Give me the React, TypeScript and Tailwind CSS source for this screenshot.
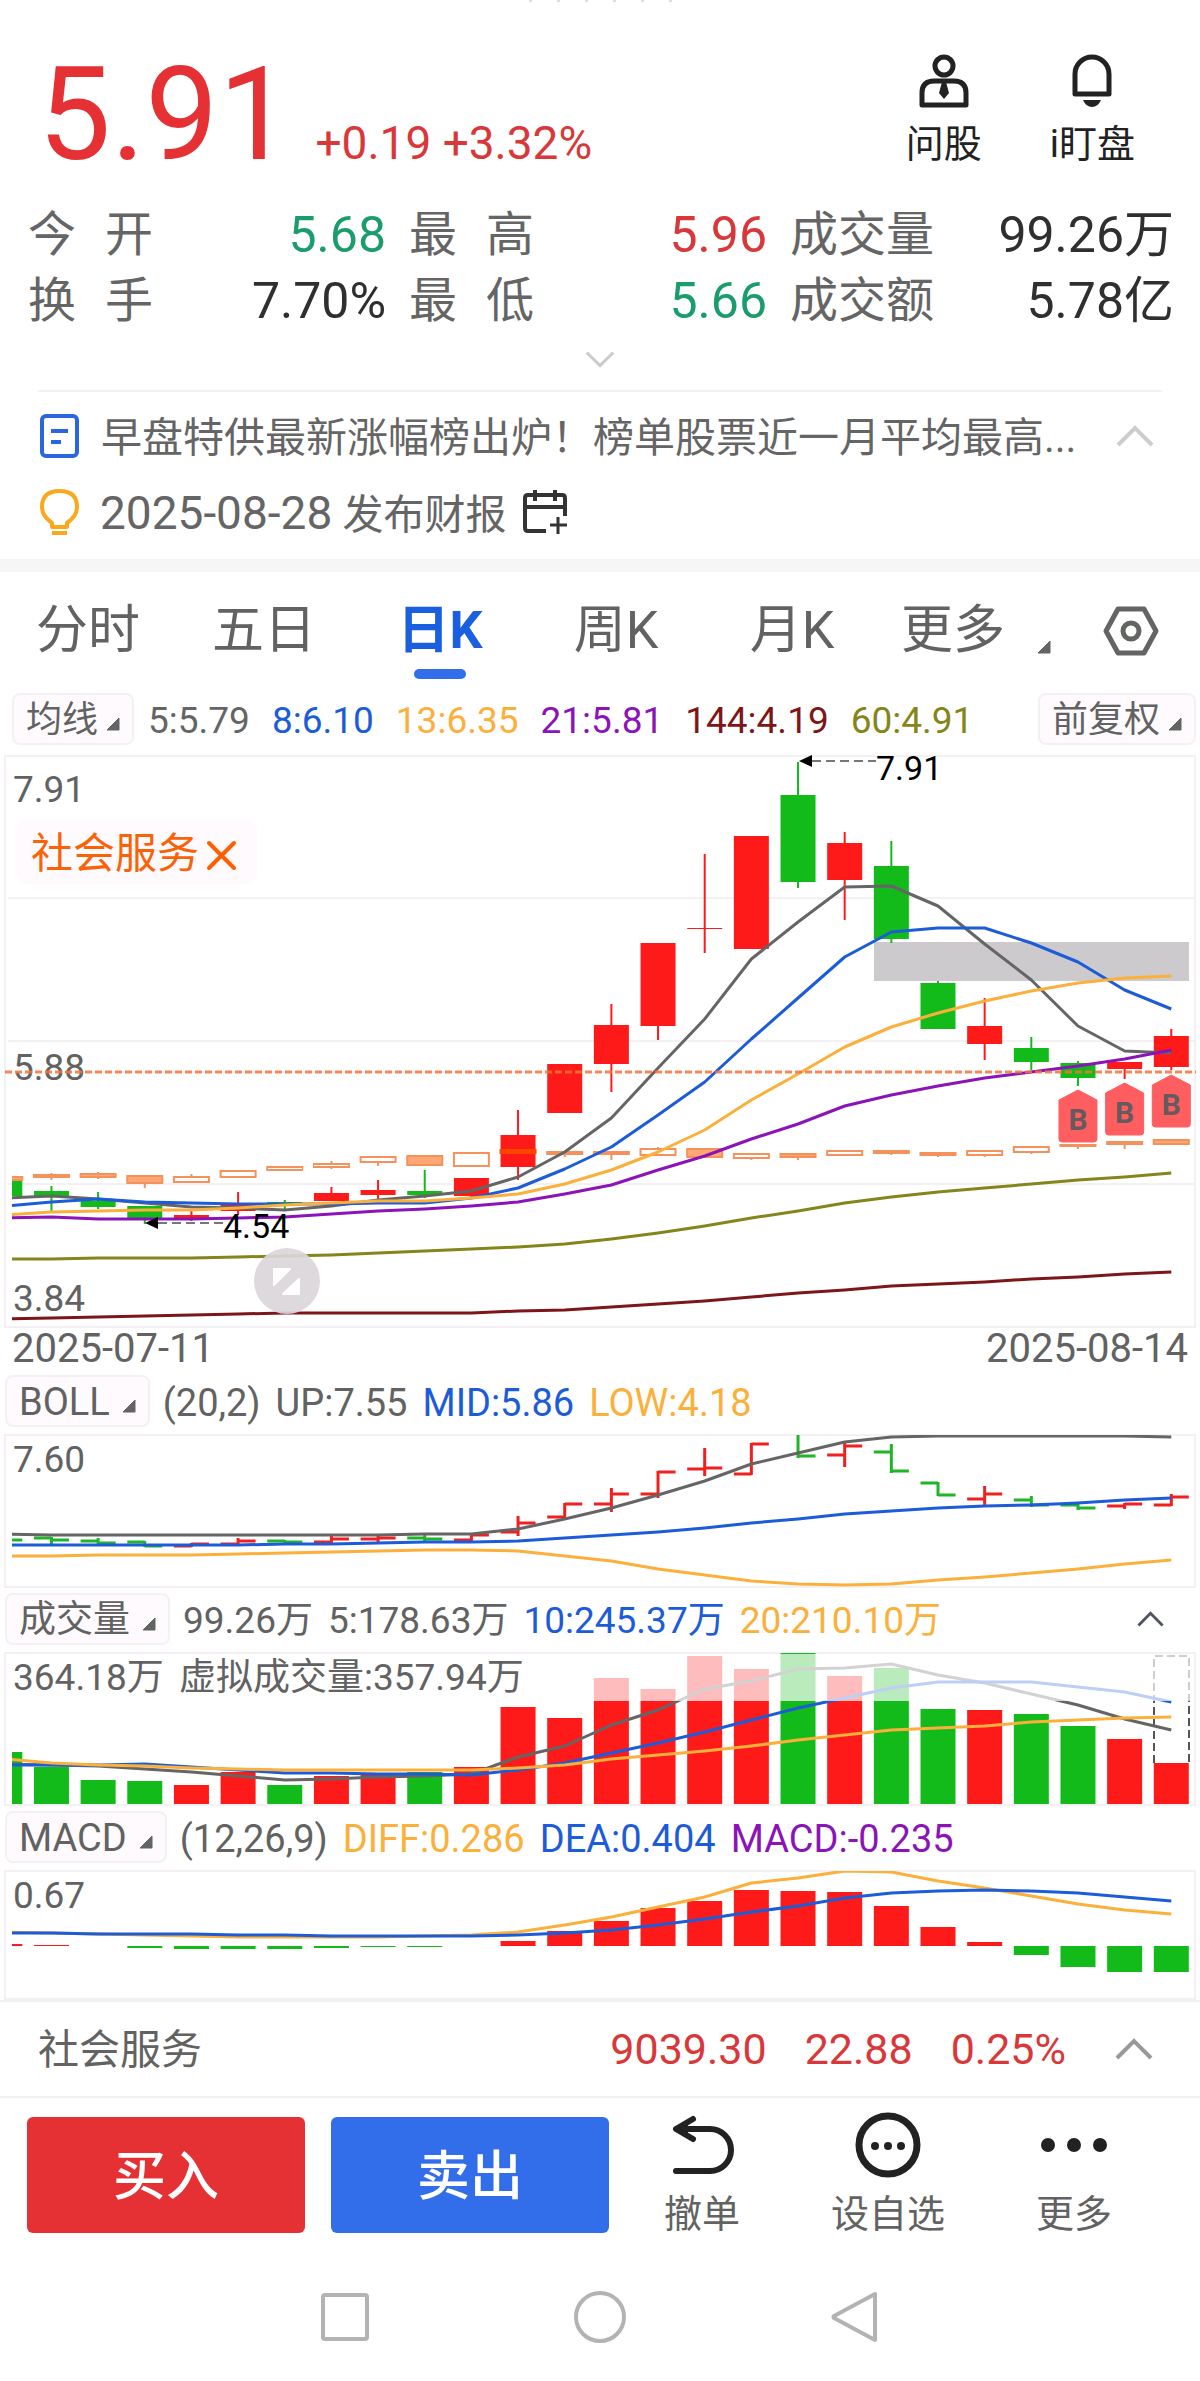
import type { ReactNode } from "react";

const RED = "#ff1a1a";
const GREEN = "#12bb1a";
const GRAY = "#656565";
const BLUE = "#1c5cd8";
const AMBER = "#fbb03b";
const PURPLE = "#8b14b8";
const MAROON = "#7d1618";
const OLIVE = "#85851c";
const FRAME = "#f5f0f4";

const STEP = 46.66;
const HALF = 17.5;
const cx = (i: number) => 4.8 + i * STEP;

// [up, top, bottom, high, low]
const candles: [number, number, number, number, number][] = [
  [0, 425, 441, 425, 441], [0, 436, 441, 431, 456], [0, 446, 452, 437, 454], [0, 451, 463, 451, 469],
  [1, 460, 463, 454, 466], [1, 449, 456, 437, 460], [0, 447, 449, 445, 456], [1, 438, 446, 432, 446],
  [1, 435, 440, 425, 445], [0, 436, 440, 415, 443], [1, 423, 441, 423, 442], [1, 380, 412, 355, 425],
  [1, 309, 358, 309, 358], [1, 270, 309, 249, 337], [1, 188, 271, 188, 285], [1, 173, 174, 99, 198],
  [1, 81, 194, 81, 194], [0, 40, 127, 7, 133], [1, 88, 125, 77, 165], [0, 111, 184, 86, 188],
  [0, 228, 274, 226, 274], [1, 271, 289, 243, 305], [0, 293, 307, 282, 315], [0, 308, 323, 306, 331],
  [1, 307, 314, 307, 324], [1, 281, 312, 274, 315]
];

// sector index drawn over the stock: [filled, top, bottom, high, low]
const sector: [number, number, number, number, number][] = [
  [1, 422, 425, 422, 425], [1, 420, 422, 418, 425], [1, 419, 422, 417, 424], [1, 421, 428, 421, 433],
  [0, 422, 427, 419, 427], [0, 416, 422, 416, 422], [0, 412, 415, 412, 415], [0, 409, 412, 406, 414],
  [0, 402, 407, 402, 411], [1, 401, 410, 401, 411], [0, 398, 411, 398, 411], [1, 395, 398, 394, 399],
  [1, 397, 399, 397, 402], [1, 397, 399, 397, 405], [0, 394, 400, 392, 401], [1, 394, 402, 394, 402],
  [0, 399, 403, 399, 405], [1, 399, 402, 399, 405], [0, 396, 400, 396, 400], [1, 396, 398, 395, 400],
  [1, 398, 400, 397, 402], [0, 396, 400, 395, 402], [0, 392, 397, 392, 399], [1, 390, 391, 389, 394],
  [1, 387, 389, 387, 394], [1, 385, 389, 385, 390]
];

const averages = [
  { color: MAROON, points: [564, 563, 562, 561, 560, 559, 558, 558, 558, 558, 558, 556, 555, 552, 549, 546, 542, 538, 535, 531, 529, 527, 524, 522, 519, 517] },
  { color: OLIVE, points: [504, 504, 503, 503, 503, 502, 501, 500, 498, 496, 494, 492, 489, 484, 478, 471, 463, 456, 448, 442, 437, 433, 429, 425, 422, 418] },
  { color: GRAY, points: [443, 441, 444, 448, 452, 453, 455, 451, 445, 441, 436, 422, 397, 363, 313, 264, 204, 167, 132, 131, 151, 189, 225, 271, 296, 298] },
  { color: BLUE, points: [451, 447, 444, 447, 448, 449, 449, 449, 448, 448, 443, 433, 414, 392, 360, 327, 284, 243, 202, 177, 173, 173, 188, 207, 235, 254] },
  { color: AMBER, points: [460, 457, 456, 455, 455, 453, 450, 448, 446, 446, 443, 439, 429, 415, 397, 375, 345, 319, 292, 272, 258, 246, 236, 228, 223, 221] },
  { color: PURPLE, points: [463, 462, 464, 464, 464, 463, 462, 459, 456, 454, 451, 447, 439, 430, 415, 401, 384, 369, 351, 340, 331, 323, 317, 311, 304, 295] }
];

// [up, open, close, high, low]
const bollBars: [number, number, number, number, number][] = [
  [0, 104, 106, 104, 106], [0, 104, 106, 104, 109], [0, 107, 109, 105, 109], [0, 108, 112, 108, 112],
  [1, 112, 110, 110, 112], [1, 110, 107, 105, 110], [0, 107, 108, 107, 108], [1, 108, 105, 103, 108],
  [1, 105, 104, 102, 107], [0, 104, 105, 102, 106], [1, 106, 101, 101, 106], [1, 98, 89, 83, 101],
  [1, 83, 70, 70, 83], [1, 70, 60, 55, 77], [1, 60, 38, 38, 63], [1, 35, 34, 15, 41],
  [1, 40, 10, 10, 40], [0, -4, 22, 1, 23], [1, 21, 12, 9, 32], [0, 18, 37, 11, 38],
  [0, 49, 61, 49, 61], [1, 65, 60, 53, 70], [0, 66, 71, 63, 72], [0, 71, 74, 69, 75],
  [1, 72, 70, 70, 74], [1, 71, 63, 61, 71]
];

const bollLines = [
  { color: GRAY, points: [100, 101, 101, 101, 101, 101, 101, 101, 101, 100, 100, 95, 85, 74, 61, 47, 30, 19, 8, 3, 2, 2, 2, 2, 2, 3] },
  { color: BLUE, points: [111, 111, 111, 111, 111, 111, 110, 110, 109, 108, 108, 107, 104, 101, 98, 94, 89, 85, 80, 77, 74, 72, 71, 69, 66, 64] },
  { color: AMBER, points: [122, 122, 121, 121, 121, 120, 119, 118, 117, 116, 116, 117, 122, 127, 135, 141, 147, 150, 151, 150, 146, 143, 139, 135, 130, 126] }
];

// [up, top]
const volumes: [number, number][] = [
  [0, 100], [0, 115], [0, 128], [0, 129], [1, 133], [1, 120], [0, 133], [1, 124], [1, 122], [0, 120], [1, 115], [1, 55], [1, 66],
  [1, 26], [1, 37], [1, 4], [1, 17], [0, 1], [1, 24], [0, 16], [0, 57], [1, 58], [0, 62], [0, 74], [1, 87], [1, 111]
];

const volumeLines = [
  { color: GRAY, points: [112, 113, 114, 117, 120, 124, 128, 127, 125, 124, 122, 105, 94, 73, 58, 37, 29, 17, 16, 12, 23, 31, 42, 53, 67, 78] },
  { color: BLUE, points: [113, 113, 113, 112, 115, 118, 121, 121, 122, 122, 123, 118, 111, 101, 91, 80, 68, 56, 46, 36, 30, 30, 30, 35, 40, 50] },
  { color: AMBER, points: [107, 111, 113, 114, 116, 117, 118, 118, 118, 118, 118, 116, 113, 107, 103, 99, 94, 88, 83, 78, 76, 74, 70, 68, 66, 65] }
];

const macdBars = [-2, -1, 0, 2, 3, 3, 3, 2, 1, 1, 0, -5, -15, -25, -38, -45, -56, -55, -54, -40, -19, -4, 9, 21, 26, 26];

const macdLines = [
  { color: AMBER, points: [62, 63, 64, 65, 66, 67, 67, 67, 67, 66, 65, 62, 55, 47, 37, 27, 13, 8, 1, 2, 11, 18, 26, 34, 40, 44] },
  { color: BLUE, points: [63, 63, 64, 64, 64, 65, 65, 66, 66, 66, 66, 65, 63, 60, 55, 49, 42, 36, 28, 23, 21, 20, 21, 23, 27, 31] }
];

const buyMarks = [{ i: 23, y: 335 }, { i: 24, y: 328 }, { i: 25, y: 320 }];

const stats = [
  { name: ["今", "开"], value: "5.68", tone: "text-[#1a9c6b]" },
  { name: ["最", "高"], value: "5.96", tone: "text-[#d9383a]" },
  { name: ["成交量"], value: "99.26万", tone: "text-[#2f2f2f]" },
  { name: ["换", "手"], value: "7.70%", tone: "text-[#2f2f2f]" },
  { name: ["最", "低"], value: "5.66", tone: "text-[#1a9c6b]" },
  { name: ["成交额"], value: "5.78亿", tone: "text-[#2f2f2f]" }
];

const periods = ["分时", "五日", "日K", "周K", "月K"];

function Lines({ series }: { series: { color: string; points: number[] }[] }) {
  return (
    <>
      {series.map((line) => (
        <polyline
          key={line.color}
          points={line.points.map((y, i) => `${cx(i)},${y}`).join(" ")}
          fill="none"
          stroke={line.color}
          strokeWidth="3"
          strokeLinejoin="round"
        />
      ))}
    </>
  );
}

function Chart({ height, label, id, children }: { height: number; label: string; id: string; children: ReactNode }) {
  return (
    <svg viewBox={`0 0 1200 ${height}`} className="block h-auto w-full overflow-visible" role="img" aria-label={label}>
      <clipPath id={id}>
        <rect x="12" y="1" width="1178" height={height - 2} />
      </clipPath>
      <rect x="5" y="1" width="1190" height={height - 2} fill="none" stroke={FRAME} strokeWidth="2" />
      {children}
    </svg>
  );
}

function Corner({ className = "" }: { className?: string }) {
  return (
    <svg viewBox="0 0 14 14" className={`size-[14px] shrink-0 ${className}`} aria-hidden="true">
      <path d="M13 1v12H1z" fill="#626562" stroke="#626562" strokeWidth="1" strokeLinejoin="round" />
    </svg>
  );
}

function Chevron({ down = false, className }: { down?: boolean; className: string }) {
  return (
    <svg viewBox="0 0 38 22" className={className} fill="none" stroke="currentColor" strokeWidth="4" aria-hidden="true">
      <path d={down ? "M2 2l17 17L36 2" : "M2 20L19 3l17 17"} />
    </svg>
  );
}

function Picker({ children, className }: { children: ReactNode; className: string }) {
  return (
    <button className={`flex h-[52px] shrink-0 items-center rounded-lg border-2 border-[#f5f0f4] bg-[#fefafe] pt-[2px] text-[#626262] ${className}`}>
      {children}
      <Corner className="mt-2" />
    </button>
  );
}

function IndicatorRow({ name, size = "text-[38px]", children }: { name: string; size?: string; children: ReactNode }) {
  return (
    <div className={`flex items-center gap-[15px] pt-[5px] pr-[36px] pb-[7px] pl-[5px] leading-[48px] whitespace-nowrap text-[#626262] [&>span]:pt-1 ${size}`}>
      <Picker className="-mr-[2px] gap-3 px-3">{name}</Picker>
      {children}
    </div>
  );
}

function PriceChart() {
  return (
    <Chart height={573} label="日K线图" id="price">
      {[143, 286, 429].map((y) => (
        <path key={y} d={`M8 ${y}H1194`} stroke={FRAME} strokeWidth="2" />
      ))}
      <rect x="16" y="64" width="241" height="65" rx="12" fill="#fefafe" />
      <g fill="#626262" fontSize="37">
        <text x="13" y="47">7.91</text>
        <text x="13" y="325">5.88</text>
        <text x="13" y="556">3.84</text>
      </g>
      <text x="31" y="113" fill="#fa6208" fontSize="42">社会服务</text>
      <path d="M209 88l25 25M234 88l-25 25" stroke="#fe5f00" strokeWidth="4" strokeLinecap="round" />
      <rect x="874" y="187" width="315" height="39" fill="#cdcacd" />
      <g clipPath="url(#price)">
        {candles.map(([up, top, bottom, high, low], i) => (
          <g key={i} fill={up ? RED : GREEN}>
            <rect x={cx(i) - HALF} y={top} width={HALF * 2} height={bottom - top} />
            <rect x={cx(i) - 1} y={high} width="2" height={low - high} />
          </g>
        ))}
        {sector.map(([filled, top, bottom, high, low], i) => (
          <g key={i} stroke={i === 11 ? "#ff4400" : "#f5925c"} strokeWidth="2">
            <path d={`M${cx(i)} ${high}V${top}M${cx(i)} ${bottom}V${low}`} />
            <rect
              x={cx(i) - HALF}
              y={top}
              width={HALF * 2}
              height={bottom - top}
              fill={i === 11 ? "#ff4400" : filled ? "#ffa873" : "#fff"}
            />
          </g>
        ))}
        <Lines series={averages} />
      </g>
      <path d="M5 317H1196" stroke="#f0743a" strokeOpacity="0.85" strokeWidth="3" strokeDasharray="7 3" />
      {buyMarks.map(({ i, y }) => (
        <g key={i}>
          <path
            d={`M${cx(i)} ${y}l19 10v39q0 3 -3 3h-32q-3 0 -3 -3v-39z`}
            fill="#ff5e61"
            stroke="#ff5e61"
            strokeLinejoin="round"
          />
          <text x={cx(i)} y={y + 40} textAnchor="middle" fontSize="30" fontWeight="700" fill="#685a5c">B</text>
        </g>
      ))}
      <g fontSize="34" fill="#000">
        <path d="M799 6l13-6v12z" />
        <path d="M812 6H876" stroke="#777" strokeWidth="2" strokeDasharray="9 5" />
        <text x="876" y="25">7.91</text>
        <path d="M145 468l13-6v12z" />
        <path d="M158 468H223" stroke="#777" strokeWidth="2" strokeDasharray="9 5" />
        <text x="223" y="483">4.54</text>
      </g>
      <circle cx="287" cy="526" r="33" fill="#dad6da" fillOpacity="0.92" />
      <path d="M274 514h16l-16 16zM299 524v15h-16z" fill="#fff" stroke="#fff" strokeWidth="2" strokeLinejoin="round" />
    </Chart>
  );
}

function BollChart() {
  return (
    <Chart height={154} label="BOLL" id="boll">
      <text x="13" y="38" fill="#626262" fontSize="37">7.60</text>
      <g clipPath="url(#boll)">
        {bollBars.map(([up, open, close, high, low], i) => (
          <path
            key={i}
            d={`M${cx(i) - HALF} ${open}H${cx(i)}M${cx(i)} ${high - 1}V${low + 1}M${cx(i)} ${close}h${HALF}`}
            stroke={up ? "#f02020" : "#1fb527"}
            strokeWidth="3"
          />
        ))}
        <Lines series={bollLines} />
      </g>
    </Chart>
  );
}

function VolumeChart() {
  return (
    <Chart height={154} label="成交量" id="volume">
      <g clipPath="url(#volume)">
        {volumes.map(([up, top], i) => (
          <rect key={i} x={cx(i) - HALF} y={top} width={HALF * 2} height={152 - top} fill={up ? RED : GREEN} />
        ))}
        <path d="M1154 111V4h35v107" fill="none" stroke="#555" strokeWidth="2" strokeDasharray="8 4" />
        <Lines series={volumeLines} />
        <rect x="580" y="2" width="610" height="47" fill="#fff" fillOpacity="0.71" />
      </g>
      <g fill="#626262" fontSize="37">
        <text x="13" y="38">364.18万</text>
        <text x="179" y="38">虚拟成交量:357.94万</text>
      </g>
    </Chart>
  );
}

function MacdChart() {
  return (
    <Chart height={130} label="MACD" id="macd">
      <text x="13" y="38" fill="#626262" fontSize="37">0.67</text>
      <g clipPath="url(#macd)">
        {macdBars.map((value, i) => (
          <rect
            key={i}
            x={cx(i) - HALF}
            y={value < 0 ? 76 + value : 76}
            width={HALF * 2}
            height={Math.abs(value)}
            fill={value < 0 ? RED : GREEN}
          />
        ))}
        <Lines series={macdLines} />
      </g>
    </Chart>
  );
}

function Header() {
  return (
    <header>
      <div className="flex h-[2px] justify-center gap-[25px]" aria-hidden="true">
        {[0, 1, 2, 3, 4, 5].map((n) => (
          <span key={n} className="w-[3px] bg-[#dedede]" />
        ))}
      </div>
      <div className="flex items-start justify-between pt-[50px] pr-[65px] pl-[38px]">
        <div className="flex items-baseline gap-6 whitespace-nowrap">
          <strong className="text-[130px] leading-[126px] font-normal text-[#e53133]">5.91</strong>
          <span className="text-[46px] leading-[50px] text-[#d9383a]">+0.19 +3.32%</span>
        </div>
        <div className="flex gap-[68px] text-[38px] leading-[42px] text-[#222]">
          <button className="flex flex-col items-center gap-[15px]">
            <svg viewBox="0 0 56 56" className="size-[56px]" fill="none" stroke="#222" strokeWidth="5" aria-hidden="true">
              <circle cx="28" cy="14" r="9" />
              <path d="M6 53V41q0-12 12-12h20q12 0 12 12v12z" strokeLinejoin="round" />
              <path d="M26 30h4l3 11-5 6-5-6z" fill="#222" stroke="none" />
            </svg>
            问股
          </button>
          <button className="flex flex-col items-center gap-[15px]">
            <svg viewBox="0 0 56 56" className="size-[56px]" fill="none" stroke="#222" strokeWidth="5" aria-hidden="true">
              <path d="M11 42V22a17 17 0 0134 0v20z" strokeLinejoin="round" />
              <path d="M19 48h18q-3 7-9 7t-9-7z" fill="#222" stroke="none" />
            </svg>
            i盯盘
          </button>
        </div>
      </div>
      <dl className="mt-6 grid grid-cols-[358fr_358fr_384fr] gap-x-[23px] pr-[26px] pl-7 text-[48px] leading-[66px] whitespace-nowrap">
        {stats.map((item) => (
          <div key={item.name.join("")} className="flex justify-between">
            <dt className="flex gap-[29px] text-[#656565]">
              {item.name.map((part) => (
                <span key={part}>{part}</span>
              ))}
            </dt>
            <dd className={`text-[50px] ${item.tone}`}>{item.value}</dd>
          </div>
        ))}
      </dl>
      <button className="flex h-[56px] w-full items-center justify-center pb-[6px] text-[#ccc]" aria-label="展开">
        <Chevron down className="h-[17px] w-[30px]" />
      </button>
    </header>
  );
}

function News() {
  return (
    <section className="mx-[38px] border-t-2 border-[#f5f0f4] pb-[15px] text-[41px] leading-[48px] whitespace-nowrap text-[#656565]">
      <div className="flex h-[88px] items-center">
        <svg viewBox="0 0 42 46" className="h-[46px] w-[42px] shrink-0" fill="none" stroke="#2a66e0" strokeWidth="4" aria-hidden="true">
          <rect x="4" y="3" width="35" height="40" rx="4" />
          <path d="M13 18h17M13 29h10" />
        </svg>
        <a href="#news" className="ml-[21px] min-w-0 truncate pt-[3px]">早盘特供最新涨幅榜出炉！榜单股票近一月平均最高...</a>
        <button className="mr-[8px] ml-auto text-[#ccc]" aria-label="收起">
          <Chevron className="h-[22px] w-[38px]" />
        </button>
      </div>
      <div className="flex h-[64px] items-center">
        <svg viewBox="0 0 42 46" className="h-[46px] w-[42px] shrink-0" fill="none" stroke="#fba81c" strokeWidth="4" aria-hidden="true">
          <path d="M14 38v-4q-10-7-10-16Q4 2 21.500 2T39 18q0 9-10 16v4z" strokeLinejoin="round" />
          <path d="M14 44h15" />
        </svg>
        <span className="ml-[20px] pt-[3px]">
          <time dateTime="2025-08-28" className="text-[46px]">2025-08-28</time> 发布财报
        </span>
        <button className="ml-4" aria-label="加入日历">
          <svg viewBox="0 0 46 46" className="size-[46px]" fill="none" stroke="#333" strokeWidth="4" aria-hidden="true">
            <path d="M24 42H6q-3 0-3-3V9q0-3 3-3h34q3 0 3 3v18M3 18h40M13 1v11M33 1v11" />
            <path d="M36 28v17M28 36h17" strokeWidth="3" />
          </svg>
        </button>
      </div>
    </section>
  );
}

function PeriodTabs() {
  return (
    <nav className="grid grid-cols-[176fr_176fr_176fr_176fr_176fr_320fr] pt-[31px] text-[52px] leading-[56px] text-[#626262]">
      {periods.map((period) =>
        period === "日K" ? (
          <button key={period} className="flex flex-col items-center gap-[10px] font-bold text-[#1a5fe0]">
            {period}
            <span className="h-[10px] w-[52px] rounded-full bg-[#326eea]" />
          </button>
        ) : (
          <button key={period} className="self-start">{period}</button>
        )
      )}
      <div className="flex items-center self-start pr-[41px] pl-[21px]">
        <button className="flex items-center gap-[32px]">
          更多
          <Corner className="mt-[32px]" />
        </button>
        <button className="ml-auto" aria-label="设置">
          <svg viewBox="0 0 56 52" className="h-[52px] w-[56px]" fill="none" stroke="#626562" strokeWidth="5" aria-hidden="true">
            <path d="M15 4h26l12 22-12 22H15L3 26z" strokeLinejoin="round" />
            <circle cx="28" cy="26" r="8" />
          </svg>
        </button>
      </div>
    </nav>
  );
}

export default function App() {
  return (
    <main className="w-full bg-white [font-family:Roboto,'Noto_Sans_CJK_SC',sans-serif]">
      <Header />
      <News />
      <div className="h-[13px] bg-[#f6f6f6]" />
      <PeriodTabs />

      <div className="mt-[14px] mb-[10px] flex items-center gap-[22px] pr-1 pl-3 text-[37px] leading-[48px] whitespace-nowrap [&>span]:pt-1">
        <Picker className="-mr-2 gap-2 px-3 text-[36px]">均线</Picker>
        <span className="text-[#656565]">5:5.79</span>
        <span className="text-[#1c5cd8]">8:6.10</span>
        <span className="text-[#fbb03b]">13:6.35</span>
        <span className="text-[#8b14b8]">21:5.81</span>
        <span className="text-[#7d1618]">144:4.19</span>
        <span className="text-[#85851c]">60:4.91</span>
        <Picker className="ml-auto gap-2 px-3 text-[36px]">前复权</Picker>
      </div>
      <PriceChart />
      <div className="flex justify-between px-3 text-[40px] leading-[42px] text-[#626262]">
        <time dateTime="2025-07-11">2025-07-11</time>
        <time dateTime="2025-08-14">2025-08-14</time>
      </div>

      <IndicatorRow name="BOLL">
        <span>(20,2)</span>
        <span>UP:7.55</span>
        <span className="text-[#1c5cd8]">MID:5.86</span>
        <span className="text-[#fbb03b]">LOW:4.18</span>
      </IndicatorRow>
      <BollChart />

      <IndicatorRow name="成交量" size="text-[37px]">
        <span>99.26万</span>
        <span>5:178.63万</span>
        <span className="text-[#1c5cd8]">10:245.37万</span>
        <span className="text-[#fbb03b]">20:210.10万</span>
        <button className="ml-auto text-[#505462]" aria-label="收起">
          <Chevron className="h-[16px] w-[27px]" />
        </button>
      </IndicatorRow>
      <VolumeChart />

      <IndicatorRow name="MACD">
        <span>(12,26,9)</span>
        <span className="text-[#fbb03b]">DIFF:0.286</span>
        <span className="text-[#1c5cd8]">DEA:0.404</span>
        <span className="text-[#8b14b8]">MACD:-0.235</span>
      </IndicatorRow>
      <MacdChart />

      <section className="flex h-[98px] items-center border-y-2 border-[#f5f0f4] pr-[47px] pl-[38px] text-[43px] text-[#d9383a]">
        <span className="pt-[3px] text-[41px] text-[#626262]">社会服务</span>
        <span className="ml-auto">9039.30</span>
        <span className="ml-[38px]">22.88</span>
        <span className="ml-[38px]">0.25%</span>
        <button className="ml-[49px] text-[#999]" aria-label="展开板块">
          <Chevron className="h-[22px] w-[38px]" />
        </button>
      </section>

      <div className="grid grid-cols-[304fr_278fr_186fr_186fr_186fr] items-end pt-[14px] pr-[33px] pl-[27px] text-[38px] leading-[38px] text-[#626262]">
        <button className="mr-[26px] h-[116px] rounded-md bg-[#e53133] pt-1 text-[53px] font-medium text-white">买入</button>
        <button className="h-[116px] rounded-md bg-[#326eea] pt-1 text-[53px] font-medium text-white">卖出</button>
        <button className="flex flex-col items-center gap-[17px]">
          <svg viewBox="0 0 66 66" className="size-[66px]" fill="none" stroke="#222" strokeWidth="6" strokeLinecap="round" strokeLinejoin="round" aria-hidden="true">
            <path d="M24 7L7 17l17 10" />
            <path d="M8 17h33a21 21 0 010 42H7" />
            <path d="M9 17l9-5v10z" fill="#222" strokeWidth="2" />
          </svg>
          撤单
        </button>
        <button className="flex flex-col items-center gap-[17px]">
          <svg viewBox="0 0 66 66" className="size-[66px]" aria-hidden="true">
            <circle cx="33" cy="33" r="29" fill="none" stroke="#222" strokeWidth="7" />
            <g fill="#222">
              <circle cx="20" cy="34" r="4" />
              <circle cx="33" cy="34" r="4" />
              <circle cx="46" cy="34" r="4" />
            </g>
          </svg>
          设自选
        </button>
        <button className="flex flex-col items-center gap-[17px]">
          <svg viewBox="0 0 66 66" className="size-[66px]" fill="#222" aria-hidden="true">
            <circle cx="7" cy="33" r="7" />
            <circle cx="33" cy="33" r="7" />
            <circle cx="59" cy="33" r="7" />
          </svg>
          更多
        </button>
      </div>

      <footer className="flex justify-center gap-[203px] pt-[58px] pb-[38px]">
        <button aria-label="最近任务">
          <svg viewBox="0 0 52 52" className="size-[52px]" fill="none" stroke="#b4b3b4" strokeWidth="4" aria-hidden="true">
            <rect x="4" y="4" width="44" height="44" rx="2" />
          </svg>
        </button>
        <button aria-label="主页">
          <svg viewBox="0 0 52 52" className="size-[52px]" fill="none" stroke="#b4b3b4" strokeWidth="4" aria-hidden="true">
            <circle cx="26" cy="26" r="24" />
          </svg>
        </button>
        <button aria-label="返回">
          <svg viewBox="0 0 52 52" className="size-[52px]" fill="none" stroke="#b4b3b4" strokeWidth="4" strokeLinejoin="round" aria-hidden="true">
            <path d="M46 3v46L5 27q-1-1 0-2z" />
          </svg>
        </button>
      </footer>
    </main>
  );
}
